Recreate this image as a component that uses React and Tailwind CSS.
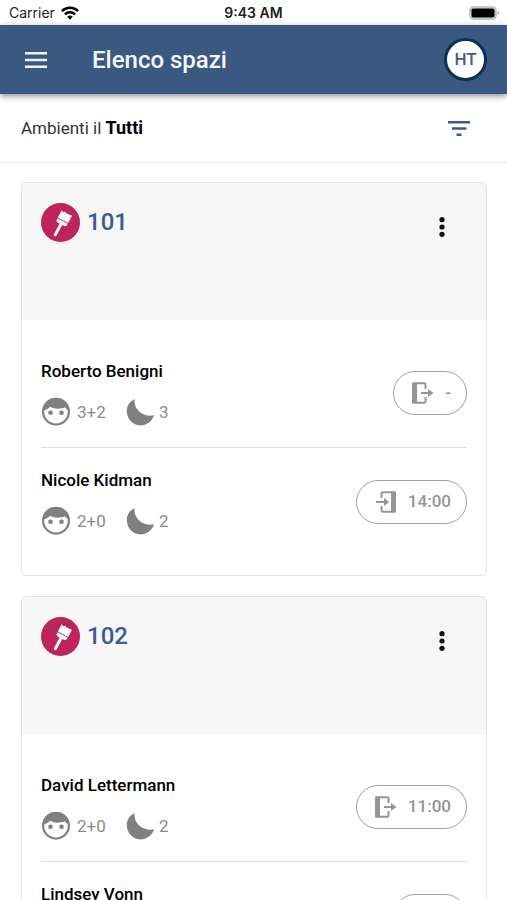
import React from "react";

const ROOMS = [
  {
    number: "101",
    guests: [
      { name: "Roberto Benigni", people: "3+2", nights: "3", direction: "out", time: "-" },
      { name: "Nicole Kidman", people: "2+0", nights: "2", direction: "in", time: "14:00" },
    ],
  },
  {
    number: "102",
    guests: [
      { name: "David Lettermann", people: "2+0", nights: "2", direction: "out", time: "11:00" },
      { name: "Lindsey Vonn", people: "2+0", nights: "2", direction: "in", time: "-" },
    ],
  },
];

function WifiIcon() {
  return (
    <svg className="h-[14px] w-[18px]" viewBox="0 0 18 14" fill="none" stroke="#000" strokeWidth="2.5" aria-hidden="true">
      <path d="M0.9 5.2a11.4 11.4 0 0 1 16.2 0" />
      <path d="M3.9 8.4a7.2 7.2 0 0 1 10.2 0" />
      <path d="M6.2 10.8a4 4 0 0 1 5.6 0L9 13.7z" fill="#000" stroke="none" />
    </svg>
  );
}

function BatteryIcon() {
  return (
    <svg className="h-[14px] w-[31px]" viewBox="0 0 31 14" aria-hidden="true">
      <rect x="0.9" y="0.9" width="26.2" height="12.2" rx="3.5" fill="#d8d8d8" stroke="#b5b5b5" strokeWidth="1.3" />
      <rect x="2.5" y="2.5" width="23" height="9" rx="1.8" fill="#000" />
      <path d="M28.6 4.8q1.7 0.6 1.7 2.2t-1.7 2.2z" fill="#b5b5b5" />
    </svg>
  );
}

function MenuIcon() {
  return (
    <svg className="h-[16px] w-[22px]" viewBox="0 0 22 16" fill="#eef3fb" aria-hidden="true">
      <path d="M0 0h22v2.5H0zM0 6.75h22v2.5H0zM0 13.5h22V16H0z" />
    </svg>
  );
}

function FilterIcon() {
  return (
    <svg className="h-[15px] w-[22px]" viewBox="0 0 22 15" fill="#3a5c92" aria-hidden="true">
      <path d="M0 0h22v2.4H0zM4 6.3h14.5v2.4H4zM8.5 12.6h5V15h-5z" />
    </svg>
  );
}

function BrushBadge() {
  return (
    <svg className="size-[39px]" viewBox="0 0 39 39" aria-hidden="true">
      <circle cx="19.5" cy="19.5" r="19.5" fill="#bd245c" />
      <g fill="#fff" transform="translate(0 1) rotate(28 20 20)">
        <path d="M14.2 7.6l2.3 0.9 1.5-1.2 2 0.8 5.8-0.6v8.3H14.2z" />
        <path d="M14.200 16.600h11.600v1.200q0 2.400-2.600 2.400h-1.700V32q0 1.500-1.500 1.500T18.500 32V20.200h-1.700q-2.600 0-2.600-2.400z" />
      </g>
    </svg>
  );
}

function DotsIcon() {
  return (
    <svg className="h-[20px] w-[6px]" viewBox="0 0 6 20" fill="#111" aria-hidden="true">
      <circle cx="3" cy="2.7" r="2.6" />
      <circle cx="3" cy="10" r="2.6" />
      <circle cx="3" cy="17.3" r="2.6" />
    </svg>
  );
}

function FaceIcon() {
  return (
    <svg className="size-[30px]" viewBox="0 0 30 30" fill="#808080" aria-hidden="true">
      <circle cx="15" cy="14.7" r="12.900" fill="none" stroke="#808080" strokeWidth="2.2" />
      <path d="M1.600 13.200C2.400 6 8 1 15 1s12.600 5 13.400 12.200c-1.900-0.200-3.300-1.200-4.400-3-4.900 2.100-10.700 1.900-15-0.500-1.700 2.300-4.300 3.600-7.400 3.500z" />
      <circle cx="9.500" cy="15.700" r="2.300" />
      <circle cx="20.500" cy="15.700" r="2.300" />
    </svg>
  );
}

function MoonIcon() {
  return (
    <svg className="size-[30px]" viewBox="0 0 30 30" fill="#808080" aria-hidden="true">
      <path d="M8.600 2C3 4.800 0.200 9.800 0.900 15.800 1.700 23 7.400 28.400 14.400 28.400c6.400 0 11.500-3.700 13.700-10.100-4.900 1.100-10.100 0.200-14-3C10.100 12 8 7.500 8.600 2z" />
    </svg>
  );
}

function CheckOutIcon() {
  return (
    <svg className="size-[24px]" viewBox="0 0 24 24" aria-hidden="true">
      <path d="M5 2.200h8.300q1.200 0 1.200 1.200V8M14.500 16v4.600q0 1.200-1.200 1.200H5" fill="none" stroke="#959595" strokeWidth="2" />
      <path d="M2.400 1.200H6v21.600H2.400q-1.400 0-1.400-1.400V2.600q0-1.400 1.400-1.400z" fill="#959595" />
      <path d="M10 11h7V8l5.500 4-5.500 4v-3h-7z" fill="#959595" />
    </svg>
  );
}

function CheckInIcon() {
  return (
    <svg className="size-[24px]" viewBox="0 0 24 24" aria-hidden="true">
      <path d="M18 2.200H8.700q-1.200 0-1.200 1.200V8M7.500 16v4.600q0 1.200 1.200 1.200H18" fill="none" stroke="#959595" strokeWidth="2" />
      <path d="M17 1.200h3.600q1.400 0 1.400 1.400v18.800q0 1.400-1.400 1.400H17z" fill="#959595" />
      <path d="M2 11h8V8l5 4-5 4v-3H2z" fill="#959595" />
    </svg>
  );
}

function GuestRow({ guest }) {
  return (
    <li className="flex items-start justify-between border-b border-[#dedede] pt-[22px] pb-5 last:border-b-0">
      <div>
        <h3 className="text-[17px] leading-5 font-medium text-black">{guest.name}</h3>
        <div className="mt-4 flex items-center text-[17px] leading-[30px] text-[#8c8c8c]">
          <FaceIcon />
          <span className="ml-1.5 w-[49px]">{guest.people}</span>
          <MoonIcon />
          <span className="ml-[3px]">{guest.nights}</span>
        </div>
      </div>
      <button
        type="button"
        className="mt-2.5 flex h-11 items-center gap-2.5 rounded-[22px] border border-[#a0a0a0] pr-[15px] pl-[17px] text-[17px] font-medium text-[#959595]"
      >
        {guest.direction === "out" ? <CheckOutIcon /> : <CheckInIcon />}
        <span>{guest.time}</span>
      </button>
    </li>
  );
}

function RoomCard({ room }) {
  return (
    <article className="shrink-0 overflow-hidden rounded-[5px] border border-[#e4e4e4] bg-white">
      <header className="flex h-[137px] items-start justify-between bg-[#f6f6f6] px-[19px] pt-[19px]">
        <div className="flex items-center gap-[7px]">
          <BrushBadge />
          <h2 className="text-[24px] leading-10 font-medium text-[#3b5c8c]">{room.number}</h2>
        </div>
        <button type="button" aria-label="Opzioni" className="flex h-[50px] w-[50px] items-center justify-center">
          <DotsIcon />
        </button>
      </header>
      <ul className="px-[19px] py-[19px]">
        {room.guests.map((guest) => (
          <GuestRow key={guest.name} guest={guest} />
        ))}
      </ul>
    </article>
  );
}

export default function App() {
  return (
    <div className="flex h-screen flex-col overflow-hidden bg-white font-[Roboto,sans-serif]">
      <div className="grid h-[25px] shrink-0 grid-cols-3 items-center px-[7px] font-[Inter,sans-serif] text-[14px] leading-[25px] text-[#222]">
        <div className="flex items-center gap-[6px] pl-0.5">
          <span>Carrier</span>
          <WifiIcon />
        </div>
        <span className="text-center font-semibold">9:43 AM</span>
        <div className="flex justify-end">
          <BatteryIcon />
        </div>
      </div>

      <header className="relative flex h-[69px] shrink-0 items-center bg-[#3a5980] pr-5 pl-[25px] shadow-[0_2px_6px_rgba(0,0,0,0.45)]">
        <button type="button" aria-label="Menu">
          <MenuIcon />
        </button>
        <h1 className="ml-[45px] flex-1 text-[24px] leading-8 font-medium text-[#f4f8ff]">Elenco spazi</h1>
        <button
          type="button"
          className="flex size-[43px] items-center justify-center rounded-full border-3 border-[#0d3156] bg-white text-[17px] font-medium text-[#3f5d8d]"
        >
          HT
        </button>
      </header>

      <div className="flex h-[69px] shrink-0 items-center justify-between border-b border-[#e6e6e6] pr-[37px] pl-[21px]">
        <p className="text-[17px] leading-6 text-[#333]">
          Ambienti il <strong className="text-[18px] font-bold text-black">Tutti</strong>
        </p>
        <button type="button" aria-label="Filtra">
          <FilterIcon />
        </button>
      </div>

      <main className="flex min-h-0 flex-1 flex-col gap-5 overflow-y-auto pt-[19px] pr-5 pl-[21px] [scrollbar-width:none]">
        {ROOMS.map((room) => (
          <RoomCard key={room.number} room={room} />
        ))}
      </main>
    </div>
  );
}
